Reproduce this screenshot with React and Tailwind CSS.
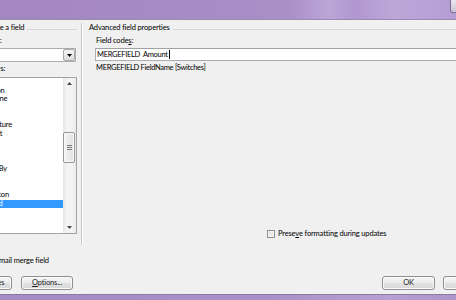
const FONT = "font-['Lato','Liberation_Sans',sans-serif]";

function Arrow({ up }) {
  return (
    <svg width="5" height="3" viewBox="0 0 5 3">
      <polygon points={up ? "0,3 5,3 2.5,0" : "0,0 5,0 2.5,3"} fill="#4a4a4a" />
    </svg>
  );
}

const items = [
  "Fill-in", "GoToButton", "GreetingLine", "Hyperlink", "If", "IncludePicture",
  "IncludeText", "Index", "Info", "Keywords", "LastSavedBy", "Link", "ListNum",
  "MacroButton", "MergeField", "MergeRec", "MergeSeq", "Next", "NextIf", "NoteRef",
];

const btn =
  "h-[14px] rounded-[3px] border border-[#8e8f8f] bg-[linear-gradient(#f4f4f4_0%,#ececec_50%,#e1e1e1_50%,#d9d9d9_100%)] shadow-[inset_0_0_0_1px_#fbfbfb] flex items-center justify-center text-[#222] shrink-0";

export default function App() {
  return (
    <div className={`w-[456px] h-[300px] overflow-hidden flex flex-col bg-[#f0f0f0] text-black text-[7.5px] tracking-[-0.15px] leading-[10px] ${FONT}`}>
      {/* title bar */}
      <div className="h-[19px] shrink-0 flex justify-end bg-[linear-gradient(90deg,#a487c2_0%,#a88cc5_50%,#ab90c8_64%,#bba6d8_72%,#b097cf_78%,#bca7d9_86%,#b59dd3_100%)]">
        <div className="w-[26px] h-[13px] -mr-[20px] rounded-b-[3px] border border-t-0 border-[#7d6d91] bg-[linear-gradient(#ebe7f0,#cbc3d6)]" />
      </div>
      <div className="h-px shrink-0 bg-[#9a8aad]" />

      {/* body */}
      <div className="flex-1 flex flex-col min-h-0">
        <div className="h-[225px] shrink-0 flex pt-[3px]">
          {/* left column */}
          <div className="-ml-[41px] w-[118px] shrink-0 flex flex-col">
            <div className="h-[10px] flex items-center">
              <span className="whitespace-nowrap">Please choose a field</span>
              <div className="flex-1 h-px bg-[#d5d5d5] mt-[2px] ml-[3px]" />
            </div>
            <div className="pl-[7px] flex flex-col">
              <div className="mt-[3px] h-[10px] whitespace-nowrap">Categories:</div>
              <div className="mt-[2px] h-[14px] w-[110px] border border-[#abadb3] bg-white flex justify-end items-center">
                <div className="w-[12px] h-[12px] border border-[#a9a9a9] rounded-[2px] bg-[linear-gradient(#f5f5f5,#dedede)] flex items-center justify-center">
                  <svg width="5" height="3" viewBox="0 0 5 3">
                    <polygon points="0,0 5,0 2.5,3" fill="#000" />
                  </svg>
                </div>
              </div>
              <div className="mt-[2px] h-[10px] whitespace-nowrap">Field names:</div>
              <div className="mt-[3px] h-[157px] w-[111px] border border-[#a3a3a3] bg-white flex overflow-hidden">
                <div className="flex-1 min-w-0 overflow-hidden">
                  <div>
                    {items.map((it) => (
                      <div
                        key={it}
                        className={`h-[8.7px] leading-[8.7px] whitespace-nowrap ${
                          it === "MergeField" ? "bg-[#3399ff] text-white" : ""
                        }`}
                      >
                        {it}
                      </div>
                    ))}
                  </div>
                </div>
                <div className="w-[13px] shrink-0 flex flex-col bg-[linear-gradient(90deg,#e6e6e6,#f4f4f4_30%,#f4f4f4_70%,#e9e9e9)]">
                  <div className="h-[11px] flex items-center justify-center">
                    <Arrow up />
                  </div>
                  <div className="flex-1 flex flex-col">
                    <div className="h-[43px]" />
                    <div className="h-[31px] mr-[1px] rounded-[2px] border border-[#979797] bg-[linear-gradient(90deg,#f3f3f3,#e2e2e2)] shadow-[inset_0_0_0_1px_#fafafa] flex flex-col items-center justify-center gap-[1px]">
                      <div className="w-[5px] h-px bg-[#7a7a7a]" />
                      <div className="w-[5px] h-px bg-[#7a7a7a]" />
                      <div className="w-[5px] h-px bg-[#7a7a7a]" />
                    </div>
                  </div>
                  <div className="h-[11px] flex items-center justify-center">
                    <Arrow />
                  </div>
                </div>
              </div>
            </div>
          </div>

          {/* divider */}
          <div className="ml-[4px] w-[2px] shrink-0 border-l border-[#c8c8c8] border-r border-r-white" />

          {/* right column */}
          <div className="ml-[6px] w-[390px] shrink-0 flex flex-col">
            <div className="h-[10px] flex items-center">
              <span className="whitespace-nowrap">Advanced field properties</span>
              <div className="flex-1 h-px bg-[#d5d5d5] mt-[2px] ml-[3px]" />
            </div>
            <div className="pl-[7px] flex-1 flex flex-col">
              <div className="mt-[3px] h-[10px] whitespace-nowrap">
                Field code<span className="underline underline-offset-1">s</span>:
              </div>
              <div className="mt-[2px] -ml-[1px] h-[13px] border border-[#abadb3] border-t-[#a0a2a8] bg-white flex items-center pl-[1px] whitespace-nowrap">
                <span className="whitespace-pre tracking-[-0.3px]">MERGEFIELD  Amount</span>
                <span className="ml-[1px] w-px h-[9px] bg-black" />
              </div>
              <div className="mt-[2px] h-[10px] whitespace-nowrap tracking-[-0.3px]">MERGEFIELD FieldName [Switches]</div>
              <div className="flex-1" />
              <div className="ml-[171px] mb-[6px] h-[10px] flex items-center gap-[3px]">
                <div className="w-[8px] h-[8px] border border-[#8f8f8f] bg-[linear-gradient(135deg,#dcdcdc,#f8f8f8)] shadow-[inset_0_0_0_1px_#f4f4f4]" />
                <span className="whitespace-nowrap">
                  Prese<span className="underline underline-offset-1">v</span>e formatting during updates
                </span>
              </div>
            </div>
          </div>
        </div>

        <div className="mt-[11px] h-[10px] -ml-[26px] whitespace-nowrap">Insert a mail merge field</div>

        <div className="mt-[10px] h-[14px] flex">
          <div className="-ml-[40px] flex gap-[9px]">
            <div className={`${btn} w-[52px]`}>Hide Codes</div>
            <div className={`${btn} w-[52px]`}>
              <span>
                <span className="underline underline-offset-1">O</span>ptions...
              </span>
            </div>
          </div>
          <div className="ml-auto -mr-[40px] flex gap-[8px]">
            <div className={`${btn} w-[53px] border-[#3c7fb1] shadow-[inset_0_0_0_1px_#a9dcf5]`}>OK</div>
            <div className={`${btn} w-[53px]`}>Cancel</div>
          </div>
        </div>
        <div className="flex-1" />
      </div>

      {/* bottom frame */}
      <div className="h-[6px] shrink-0 border-t border-[#8a7b9d] bg-[linear-gradient(90deg,#a58ac3,#aa90c8_60%,#b7a0d5_85%,#ae95cd)]" />
    </div>
  );
}
